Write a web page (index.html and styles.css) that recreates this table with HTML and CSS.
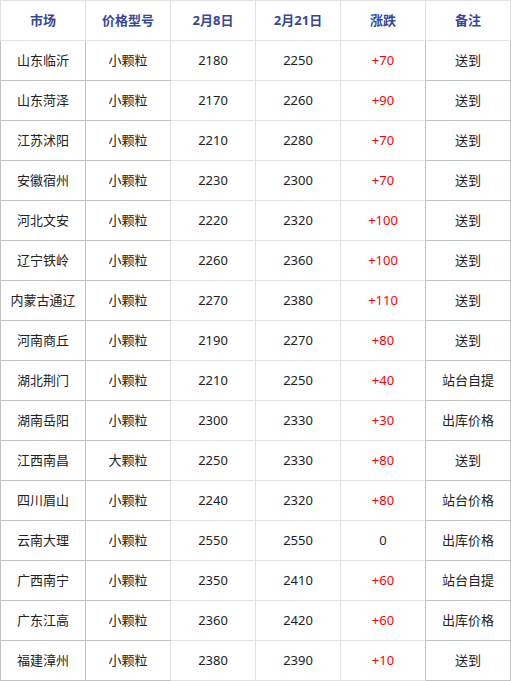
FILE: index.html
```html
<!DOCTYPE html>
<html lang="zh">
<head>
<meta charset="utf-8">
<link rel="stylesheet" href="styles.css">
</head>
<body>
<table class="price-table">
  <thead>
    <tr><th>市场</th><th>价格型号</th><th>2月8日</th><th>2月21日</th><th>涨跌</th><th>备注</th></tr>
  </thead>
  <tbody>
    <tr><td>山东临沂</td><td>小颗粒</td><td>2180</td><td>2250</td><td class="up">+70</td><td>送到</td></tr>
    <tr><td>山东菏泽</td><td>小颗粒</td><td>2170</td><td>2260</td><td class="up">+90</td><td>送到</td></tr>
    <tr><td>江苏沭阳</td><td>小颗粒</td><td>2210</td><td>2280</td><td class="up">+70</td><td>送到</td></tr>
    <tr><td>安徽宿州</td><td>小颗粒</td><td>2230</td><td>2300</td><td class="up">+70</td><td>送到</td></tr>
    <tr><td>河北文安</td><td>小颗粒</td><td>2220</td><td>2320</td><td class="up">+100</td><td>送到</td></tr>
    <tr><td>辽宁铁岭</td><td>小颗粒</td><td>2260</td><td>2360</td><td class="up">+100</td><td>送到</td></tr>
    <tr><td>内蒙古通辽</td><td>小颗粒</td><td>2270</td><td>2380</td><td class="up">+110</td><td>送到</td></tr>
    <tr><td>河南商丘</td><td>小颗粒</td><td>2190</td><td>2270</td><td class="up">+80</td><td>送到</td></tr>
    <tr><td>湖北荆门</td><td>小颗粒</td><td>2210</td><td>2250</td><td class="up">+40</td><td>站台自提</td></tr>
    <tr><td>湖南岳阳</td><td>小颗粒</td><td>2300</td><td>2330</td><td class="up">+30</td><td>出库价格</td></tr>
    <tr><td>江西南昌</td><td>大颗粒</td><td>2250</td><td>2330</td><td class="up">+80</td><td>送到</td></tr>
    <tr><td>四川眉山</td><td>小颗粒</td><td>2240</td><td>2320</td><td class="up">+80</td><td>站台价格</td></tr>
    <tr><td>云南大理</td><td>小颗粒</td><td>2550</td><td>2550</td><td>0</td><td>出库价格</td></tr>
    <tr><td>广西南宁</td><td>小颗粒</td><td>2350</td><td>2410</td><td class="up">+60</td><td>站台自提</td></tr>
    <tr><td>广东江高</td><td>小颗粒</td><td>2360</td><td>2420</td><td class="up">+60</td><td>出库价格</td></tr>
    <tr><td>福建漳州</td><td>小颗粒</td><td>2380</td><td>2390</td><td class="up">+10</td><td>送到</td></tr>
  </tbody>
</table>
</body>
</html>
```
FILE: styles.css
```css
html, body {
  margin: 0;
  padding: 0;
  background: #ffffff;
}
.price-table {
  border-collapse: separate;
  border-spacing: 0;
  table-layout: fixed;
  width: 511px;
  font-family: "Noto Sans", "Noto Sans CJK SC", sans-serif;
  font-size: 13px;
  color: #222222;
  border-top: 1px solid #e2e2e2;
  border-left: 1px solid #e2e2e2;
}
.price-table th,
.price-table td {
  width: 84px;
  height: 38px;
  padding: 0 0 1px 0;
  text-align: center;
  vertical-align: middle;
  border-right: 1px solid #e2e2e2;
  border-bottom: 1px solid #e2e2e2;
  line-height: 16px;
}
.price-table th {
  color: #34479a;
  font-weight: bold;
}
.price-table tbody td:nth-child(1),
.price-table tbody td:nth-child(2),
.price-table tbody td:nth-child(6) {
  border-bottom-color: #c2c2c2;
}
.price-table tbody td:nth-child(1),
.price-table tbody td:nth-child(5),
.price-table tbody td:nth-child(6) {
  border-right-color: #c2c2c2;
}
.price-table tbody td:first-child {
  box-shadow: -1px 0 0 #c2c2c2;
}
.price-table td.up {
  color: #ff0000;
}
```
